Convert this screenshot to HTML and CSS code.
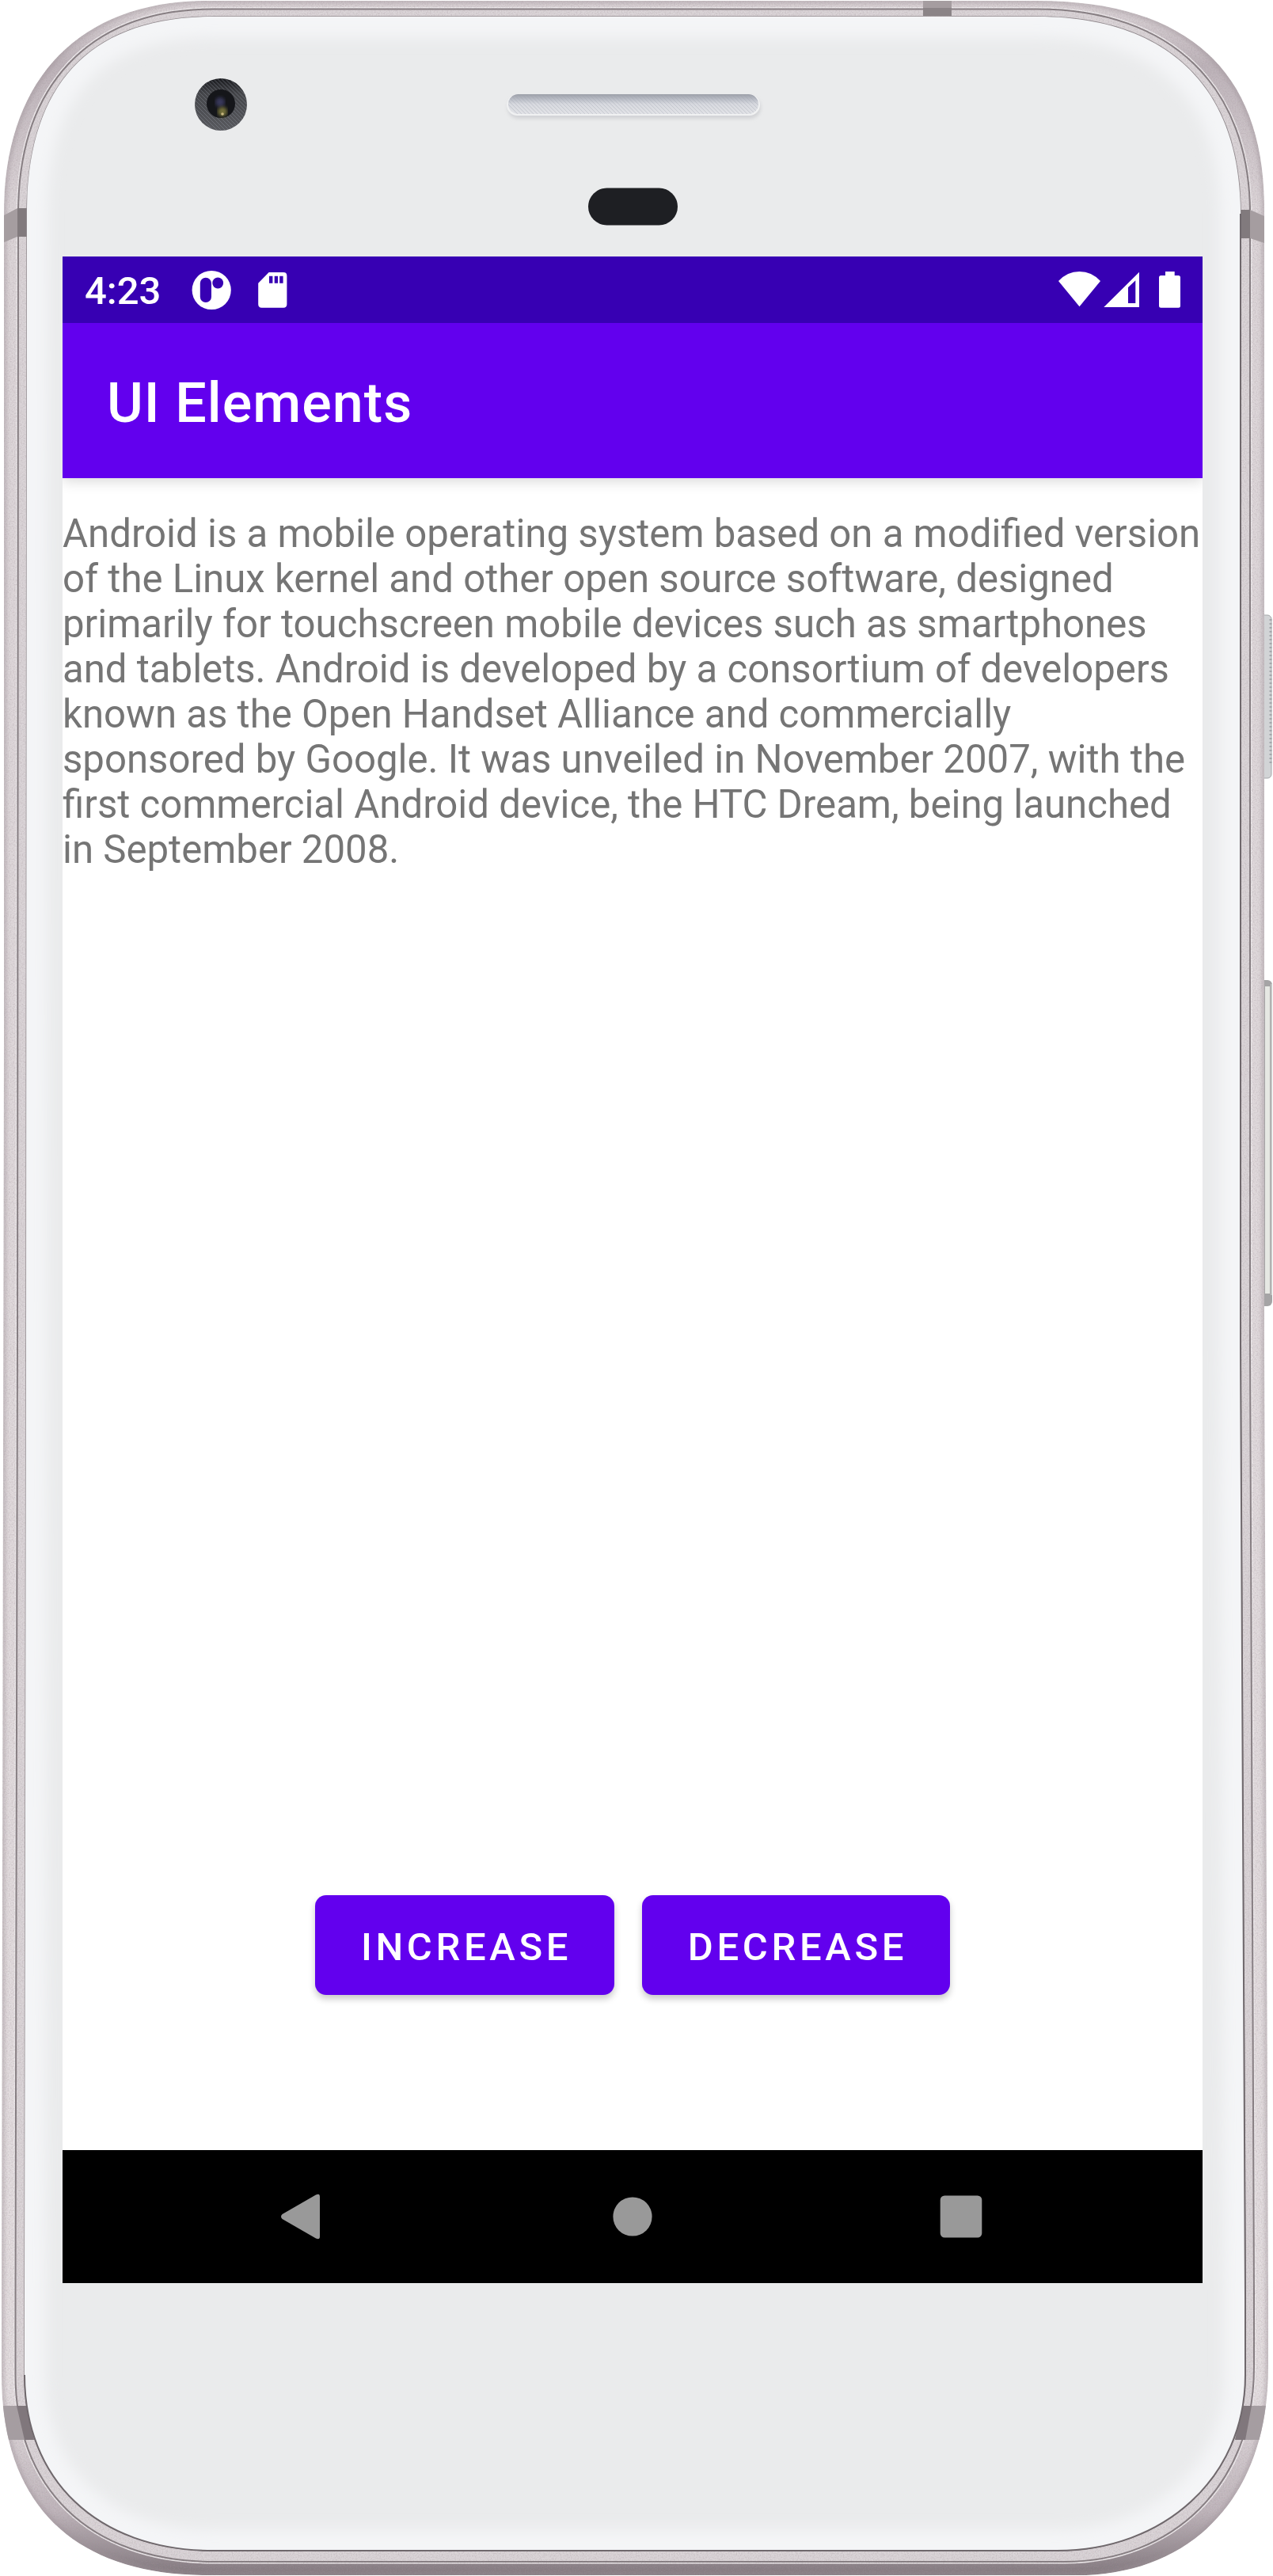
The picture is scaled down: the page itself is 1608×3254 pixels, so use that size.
FILE: index.html
```html
<!DOCTYPE html>
<html lang="en">
<head>
<meta charset="utf-8">
<title>UI Elements</title>
<link rel="stylesheet" href="styles.css">
</head>
<body>
<div class="phone">
  <svg class="shell" viewBox="0 0 1608 3254" aria-hidden="true">
    <defs>
      <linearGradient id="rim" x1="0" y1="0" x2="0" y2="1">
        <stop offset="0" stop-color="#ddd6d9"/><stop offset=".025" stop-color="#bdb3b9"/>
        <stop offset=".08" stop-color="#dcd5d8"/><stop offset=".93" stop-color="#e4dee0"/>
        <stop offset=".975" stop-color="#bfb5bb"/><stop offset="1" stop-color="#81777d"/>
      </linearGradient>
      <linearGradient id="grille" x1="0" y1="0" x2="0" y2="1">
        <stop offset="0" stop-color="#9c9fa8"/><stop offset=".28" stop-color="#bdc0c9"/>
        <stop offset=".5" stop-color="#d7d9df"/><stop offset="1" stop-color="#e1e2e6"/>
      </linearGradient>
      <linearGradient id="ring" x1="0" y1="0" x2="0" y2="1">
        <stop offset="0" stop-color="#1b1c20"/><stop offset=".3" stop-color="#45464a"/><stop offset="1" stop-color="#58595e"/>
      </linearGradient>
      <pattern id="mesh" width="5" height="5" patternUnits="userSpaceOnUse">
        <path d="M0 0L5 5" stroke="#9a9fac" stroke-width="1" opacity=".35"/>
      </pattern>
      <filter id="soft6" x="-5%" y="-5%" width="110%" height="110%"><feGaussianBlur stdDeviation="9"/></filter>
      <filter id="soft2" x="-5%" y="-20%" width="110%" height="160%"><feGaussianBlur stdDeviation="2"/></filter>
      <filter id="grain" x="0" y="0" width="100%" height="100%">
        <feTurbulence type="fractalNoise" baseFrequency=".6" numOctaves="2" seed="4"/>
        <feColorMatrix values="0 0 0 0 .36  0 0 0 0 .3  0 0 0 0 .33  1.6 0 0 0 -.65"/>
      </filter>
      <path id="outer" d="M5 270C5 100 100 1 262 1H1310C1500 1 1597 90 1597 262V1700L1602 2900V2990C1602 3160 1500 3253 1360 3253H262C100 3253 2 3170 2 3000V2900L5 1300Z"/>
      <path id="groove" d="M23 270C23 110 110 11.5 270 11.5H1310C1480 11.5 1579 110 1579 270V1700L1584 2900V2990C1584 3140 1480 3236 1345 3236H270C110 3236 19.5 3140 19.5 3000V2900L22 1700Z"/>
      <path id="face" d="M34 270C34 110 110 21 270 21H1310C1475 21 1567 110 1567 270V1700L1573 2900V3000C1573 3130 1470 3222 1335 3222H270C120 3222 31 3130 31 3000V2900L33 1700Z"/>
      <clipPath id="outerClip"><use href="#outer"/></clipPath>
      <clipPath id="faceClip"><use href="#face"/></clipPath>
    </defs>

    <!-- volume and power keys -->
    <rect x="1590" y="777" width="16" height="206" rx="5" fill="#d2d4d6" stroke="#a5a7aa"/>
    <path d="M1605 782V965" stroke="#a3a7ab" stroke-width="3" stroke-dasharray="2 3"/>
    <rect x="1590" y="1238" width="17" height="412" rx="6" fill="#a5a4a5"/>
    <rect x="1598" y="1246" width="6" height="388" fill="#e6e8e3"/>
    <path d="M1606 1243V1636" stroke="#c3c5c4" stroke-width="2"/>

    <!-- metal rim -->
    <g clip-path="url(#outerClip)">
      <use href="#outer" fill="url(#rim)"/>
      <use href="#outer" fill="none" stroke="#9e9399" stroke-width="8" opacity=".4" filter="url(#soft2)"/>
      <use href="#groove" fill="#cec7ca" stroke="#ece8ea" stroke-width="5"/>
      <use href="#groove" fill="#dad4d7" stroke="#857d81" stroke-width="2"/>
      <rect width="1608" height="3254" filter="url(#grain)" opacity=".45"/>
      <path d="M5 272L22 263H34V299H22L5 306Z" fill="#a59da0"/><path d="M22 263H34V299H22Z" fill="#817a7d"/>
      <path d="M1597 273L1579 265H1566V301H1579L1597 307Z" fill="#a59da0"/><path d="M1566 265H1579V301H1566Z" fill="#817a7d"/>
      <path d="M0 3039H34L44 3082H0Z" fill="#a59da1"/><path d="M21 3039H33L43 3082H31Z" fill="#80777c"/>
      <path d="M1568 3039H1608V3082H1560Z" fill="#a59da1"/><path d="M1570 3039H1581L1573 3082H1560Z" fill="#80777c"/>
      <path d="M1166 1H1202V10H1166Z" fill="#a59da0"/><path d="M1166 10H1202V20H1166Z" fill="#8b8487"/>
    </g>

    <!-- front glass -->
    <use href="#face" fill="#eaebec" stroke="#928b8f" stroke-width="1.500"/>
    <g clip-path="url(#faceClip)">
      <use href="#face" fill="none" stroke="#f4f5f7" stroke-width="52" filter="url(#soft6)"/>
    </g>
    <path d="M1567 270V1700L1573 2900V3000C1573 3130 1470 3222 1335 3222H270C120 3222 31 3130 31 3000" fill="none" stroke="#6f686c" stroke-width="2"/>

    <!-- camera -->
    <circle cx="279" cy="132" r="33" fill="url(#ring)"/>
    <circle cx="279" cy="132" r="33" fill="url(#mesh)"/>
    <circle cx="279" cy="131" r="18" fill="#15161a"/>
    <circle cx="278" cy="129" r="6" fill="#38375a" filter="url(#soft2)"/>
    <circle cx="281" cy="141" r="6" fill="#74713b" filter="url(#soft2)"/>
    <circle cx="281" cy="144" r="1.800" fill="#c9b981"/>

    <!-- speaker and proximity sensor -->
    <rect x="641" y="122" width="320" height="28" rx="14" fill="#d2d3d6" filter="url(#soft2)"/>
    <rect x="640" y="119" width="320" height="27" rx="13.500" fill="#f0f1f2"/>
    <rect x="642" y="119" width="316" height="25" rx="12.500" fill="url(#grille)"/>
    <rect x="642" y="119" width="316" height="25" rx="12.500" fill="url(#mesh)"/>
    <rect x="743" y="237.500" width="113" height="47" rx="23.500" fill="#1e1f23"/>
  </svg>

  <main class="screen">
    <header class="status-bar">
      <span class="clock">4:23</span>
      <svg class="notices" viewBox="242 324 122 84" aria-hidden="true">
        <circle cx="267.200" cy="366.500" r="24.600" fill="#fff"/>
        <rect x="252.800" y="350.700" width="14.200" height="31.300" rx="7.100" fill="#3700b3"/>
        <circle cx="275.200" cy="357.500" r="6.900" fill="#3700b3"/>
        <path fill="#fff" fill-rule="evenodd" d="M339.600 344H358Q362.400 344 362.400 348.400V384.300Q362.400 388.700 358 388.700H330.600Q326.200 388.700 326.200 384.300V357.700ZM340 348.700V357.700H344.400V348.700ZM346.700 348.700V357.700H351V348.700ZM353.200 348.700V357.700H357.600V348.700Z"/>
      </svg>
      <svg class="system" viewBox="1337 324 155 84" aria-hidden="true">
        <path fill="#fff" d="M1363.500 387.300L1337 355Q1348 343 1363.500 343T1390 355Z"/>
        <path fill="#fff" fill-rule="evenodd" d="M1394.300 388L1439 343.700V388ZM1425 363V383H1434.300V354.300Z"/>
        <path fill="#fff" d="M1472 343H1483.700V348H1488.500Q1491 348 1491 350.500V386.200Q1491 388.700 1488.500 388.700H1466.500Q1464 388.700 1464 386.200V350.500Q1464 348 1466.500 348H1472Z"/>
      </svg>
    </header>
    <div class="app-bar"><h1 class="title">UI Elements</h1></div>
    <div class="content">
      <p class="copy">Android is a mobile operating system based on a modified version<br>of the Linux kernel and other open source software, designed<br>primarily for touchscreen mobile devices such as smartphones<br>and tablets. Android is developed by a consortium of developers<br>known as the Open Handset Alliance and commercially<br>sponsored by Google. It was unveiled in November 2007, with the<br>first commercial Android device, the HTC Dream, being launched<br>in September 2008.</p>
      <div class="actions">
        <button class="btn btn-increase" type="button">INCREASE</button>
        <button class="btn btn-decrease" type="button">DECREASE</button>
      </div>
    </div>
    <nav class="nav-bar">
      <svg class="nav-icon" viewBox="0 0 60 60" aria-label="Back"><path d="M6.500 27L49 2.500Q54 0 54 5V55Q54 60 49 57.500L6.500 33Q3.500 30 6.500 27Z"/></svg>
      <svg class="nav-icon" viewBox="0 0 60 60" aria-label="Home"><circle cx="32" cy="30" r="24.600"/></svg>
      <svg class="nav-icon" viewBox="0 0 60 60" aria-label="Overview"><rect x="3.700" y="3.500" width="52.600" height="53" rx="5.500"/></svg>
    </nav>
  </main>
</div>
</body>
</html>
```
FILE: styles.css
```css
* { box-sizing: border-box; }

body {
  margin: 0;
  background: #fff;
  font-family: Roboto, "Liberation Sans", sans-serif;
}

.phone {
  display: grid;
  width: 1608px;
  height: 3254px;
  overflow: hidden;
}

.shell,
.screen { grid-area: 1 / 1; }

.shell {
  display: block;
  width: 1608px;
  height: 3254px;
}

.screen {
  z-index: 1;
  display: flex;
  flex-direction: column;
  width: 1440px;
  height: 2560px;
  margin: 324px 0 0 79px;
  background: #fff;
}

.status-bar {
  display: flex;
  align-items: center;
  height: 84px;
  padding: 0 27px 0 28px;
  background: #3700b3;
  color: #fff;
}

.clock {
  width: 135px;
  padding-top: 4px;
  font-size: 49px;
  font-weight: 500;
  line-height: 58px;
}

.notices { width: 122px; height: 84px; }

.system {
  width: 155px;
  height: 84px;
  margin-left: auto;
}

.app-bar {
  z-index: 1;
  display: flex;
  align-items: center;
  height: 196px;
  padding: 6px 0 0 56px;
  background: #6200ee;
  box-shadow: 0 4px 16px rgba(0, 0, 0, .15);
  clip-path: inset(0 0 -30px 0);
}

.title {
  margin: 0;
  color: #fff;
  font-size: 70px;
  font-weight: 500;
  letter-spacing: .015em;
  line-height: 82px;
}

.content {
  display: flex;
  flex: 1;
  flex-direction: column;
  justify-content: space-between;
  padding: 42px 0 196px;
}

.copy {
  margin: 0;
  color: #757575;
  font-size: 49.150px;
  line-height: 57px;
  white-space: nowrap;
}

.actions {
  display: flex;
  gap: 35px;
  padding-left: 319px;
}

.btn {
  height: 126px;
  padding: 4px 0 0 4px;
  border: 0;
  border-radius: 14px;
  background: #6200ee;
  box-shadow: 0 5px 8px rgba(0, 0, 0, .22);
  color: #fff;
  font-family: inherit;
  font-size: 49px;
  font-weight: 500;
  letter-spacing: .095em;
}

.btn-increase { width: 378px; }
.btn-decrease { width: 389px; }

.nav-bar {
  display: flex;
  align-items: center;
  justify-content: space-between;
  height: 168px;
  padding: 0 275px 0 271px;
  background: #000;
}

.nav-icon {
  width: 60px;
  height: 60px;
  fill: #999;
}
```
